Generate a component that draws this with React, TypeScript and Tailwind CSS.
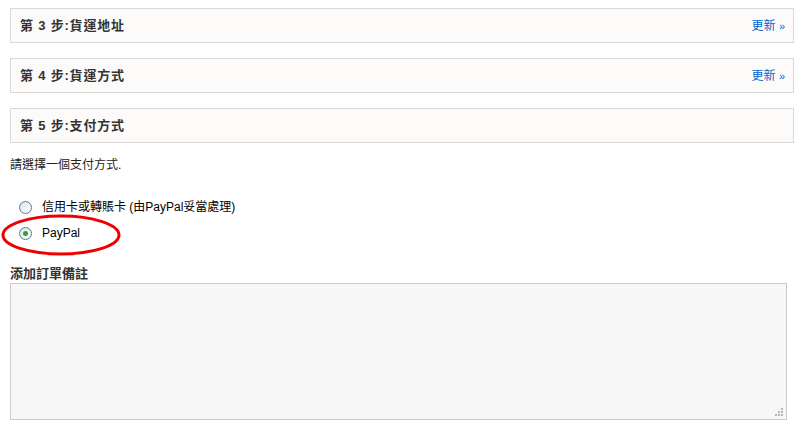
import React from 'react';

const font = { fontFamily: '"Liberation Sans", "Noto Sans CJK TC", sans-serif' };

const StepBox: React.FC<{ step: number; title: string; edit?: boolean }> = ({ step, title, edit }) => (
  <div className="flex h-[35px] items-center justify-between border border-[#d9d9d9] bg-[#fcfbf9] pl-[9px] pr-[8px]">
    <h3 className="text-[13px] font-bold tracking-[0.8px] text-[#333]">
      第 {step} 步:{title}
    </h3>
    {edit && (
      <a href="#" className="text-[12px] text-[#0066cc]">
        更新 <span className="text-[11px] text-[#0066cc]">»</span>
      </a>
    )}
  </div>
);

const Radio: React.FC<{ checked?: boolean; label: string }> = ({ checked, label }) => (
  <label className="flex h-[26px] items-center text-[12px] text-black">
    <span className="ml-[9px] mr-[10px] flex h-[13px] w-[13px] items-center justify-center rounded-full border border-[#5b7693] bg-gradient-to-br from-[#dfe4ea] to-white">
      {checked && <span className="h-[5px] w-[5px] rounded-full bg-[#2ea52e]" />}
    </span>
    {label}
  </label>
);

export default function App() {
  return (
    <div className="h-[429px] w-[807px] bg-white pl-[10px] pt-[8px] pr-[13px]" style={font}>
      <div className="flex flex-col gap-[15px]">
        <StepBox step={3} title="貨運地址" edit />
        <StepBox step={4} title="貨運方式" edit />
        <StepBox step={5} title="支付方式" />
      </div>

      <p className="mt-[13px] text-[12px] text-[#222]">請選擇一個支付方式.</p>

      <div className="relative mt-[20px]">
        <Radio label="信用卡或轉賬卡 (由PayPal妥當處理)" />
        <Radio checked label="PayPal" />
        <svg className="absolute left-[-9px] top-[20px]" width="122" height="42" viewBox="0 0 122 42">
          <ellipse cx="60" cy="21" rx="58" ry="19" fill="none" stroke="#ee0000" strokeWidth="3" />
        </svg>
      </div>

      <h4 className="mt-[20px] text-[13px] font-bold leading-[16px] text-[#333]">添加訂單備註</h4>
      <div className="relative mt-[1px] h-[137px] w-[777px] border border-[#cccccc] bg-[#f7f7f7]">
        <svg className="absolute bottom-[3px] right-[3px]" width="9" height="9" viewBox="0 0 9 9">
          <rect x="7" y="1" width="2" height="2" fill="#b5b5b5" />
          <rect x="4" y="4" width="2" height="2" fill="#b5b5b5" />
          <rect x="7" y="4" width="2" height="2" fill="#b5b5b5" />
          <rect x="1" y="7" width="2" height="2" fill="#b5b5b5" />
          <rect x="4" y="7" width="2" height="2" fill="#b5b5b5" />
          <rect x="7" y="7" width="2" height="2" fill="#b5b5b5" />
        </svg>
      </div>
    </div>
  );
}
